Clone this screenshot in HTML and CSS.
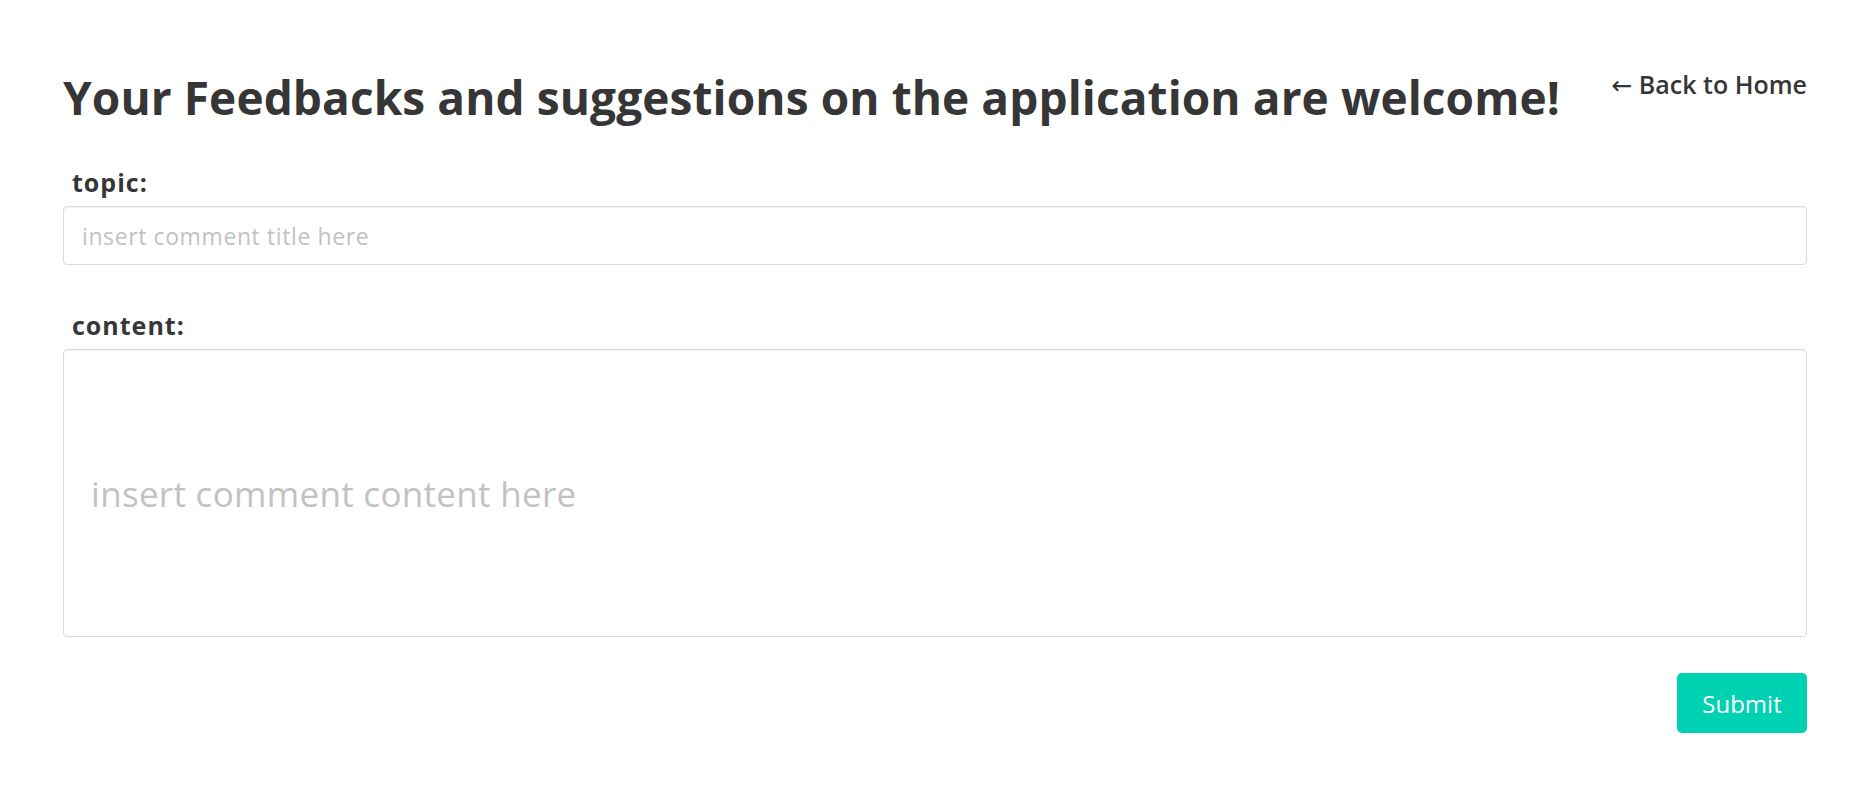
FILE: index.html
```html
<!DOCTYPE html>
<html lang="en">
<head>
<meta charset="utf-8">
<title>Feedback</title>
<link rel="stylesheet" href="styles.css">
</head>
<body>
<main class="page">
  <header class="head">
    <h1 class="title">Your Feedbacks and suggestions on the application are welcome!</h1>
    <a class="back" href="#"><span class="arrow">←</span> Back to Home</a>
  </header>
  <form class="form">
    <div class="field">
      <label class="label" for="topic">topic:</label>
      <input class="input" id="topic" type="text" placeholder="insert comment title here">
    </div>
    <div class="field field-last">
      <label class="label" for="content">content:</label>
      <input class="input area" id="content" type="text" placeholder="insert comment content here">
    </div>
    <div class="actions">
      <button class="btn" type="button">Submit</button>
    </div>
  </form>
</main>
</body>
</html>
```

FILE: styles.css
```css
* { box-sizing: border-box; }
html, body { margin: 0; background: #fff; }
body {
  font-family: "Open Sans", "DejaVu Sans", sans-serif;
  color: #363636;
}
.page {
  padding: 70px 51px 0 63px;
}
.head {
  display: flex;
  justify-content: space-between;
  align-items: flex-start;
  margin-bottom: 43px;
}
.title {
  margin: 0;
  font-size: 46px;
  line-height: 1.2;
  font-weight: 700;
  letter-spacing: 0.1px;
  color: #363636;
}
.back {
  font-size: 25px;
  line-height: 28px;
  font-weight: 600;
  color: #363636;
  text-decoration: none;
  white-space: nowrap;
}
.arrow { font-weight: 400; }
.field { margin-bottom: 46px; }
.field-last { margin-bottom: 36px; }
.label {
  display: block;
  font-size: 25px;
  line-height: 28px;
  font-weight: 700;
  letter-spacing: 1px;
  padding-left: 9px;
  margin-bottom: 10px;
  color: #363636;
}
.input {
  display: block;
  width: 100%;
  height: 59px;
  border: 1px solid #dbdbdb;
  border-radius: 4px;
  box-shadow: inset 0 1px 2px rgba(10,10,10,0.06);
  padding: 0 18px;
  font-family: inherit;
  font-size: 23px;
  letter-spacing: 0.6px;
  color: #363636;
  background: #fff;
  outline: none;
}
.input::placeholder { color: #c2c2c2; }
.area {
  height: 288px;
  padding: 0 27px;
  font-size: 35px;
  letter-spacing: 0.3px;
}
.actions {
  display: flex;
  justify-content: flex-end;
}
.btn {
  width: 130px;
  height: 60px;
  border: 0;
  border-radius: 5px;
  background: #00d1b2;
  color: #fff;
  font-family: inherit;
  font-size: 24px;
  cursor: pointer;
}
```
